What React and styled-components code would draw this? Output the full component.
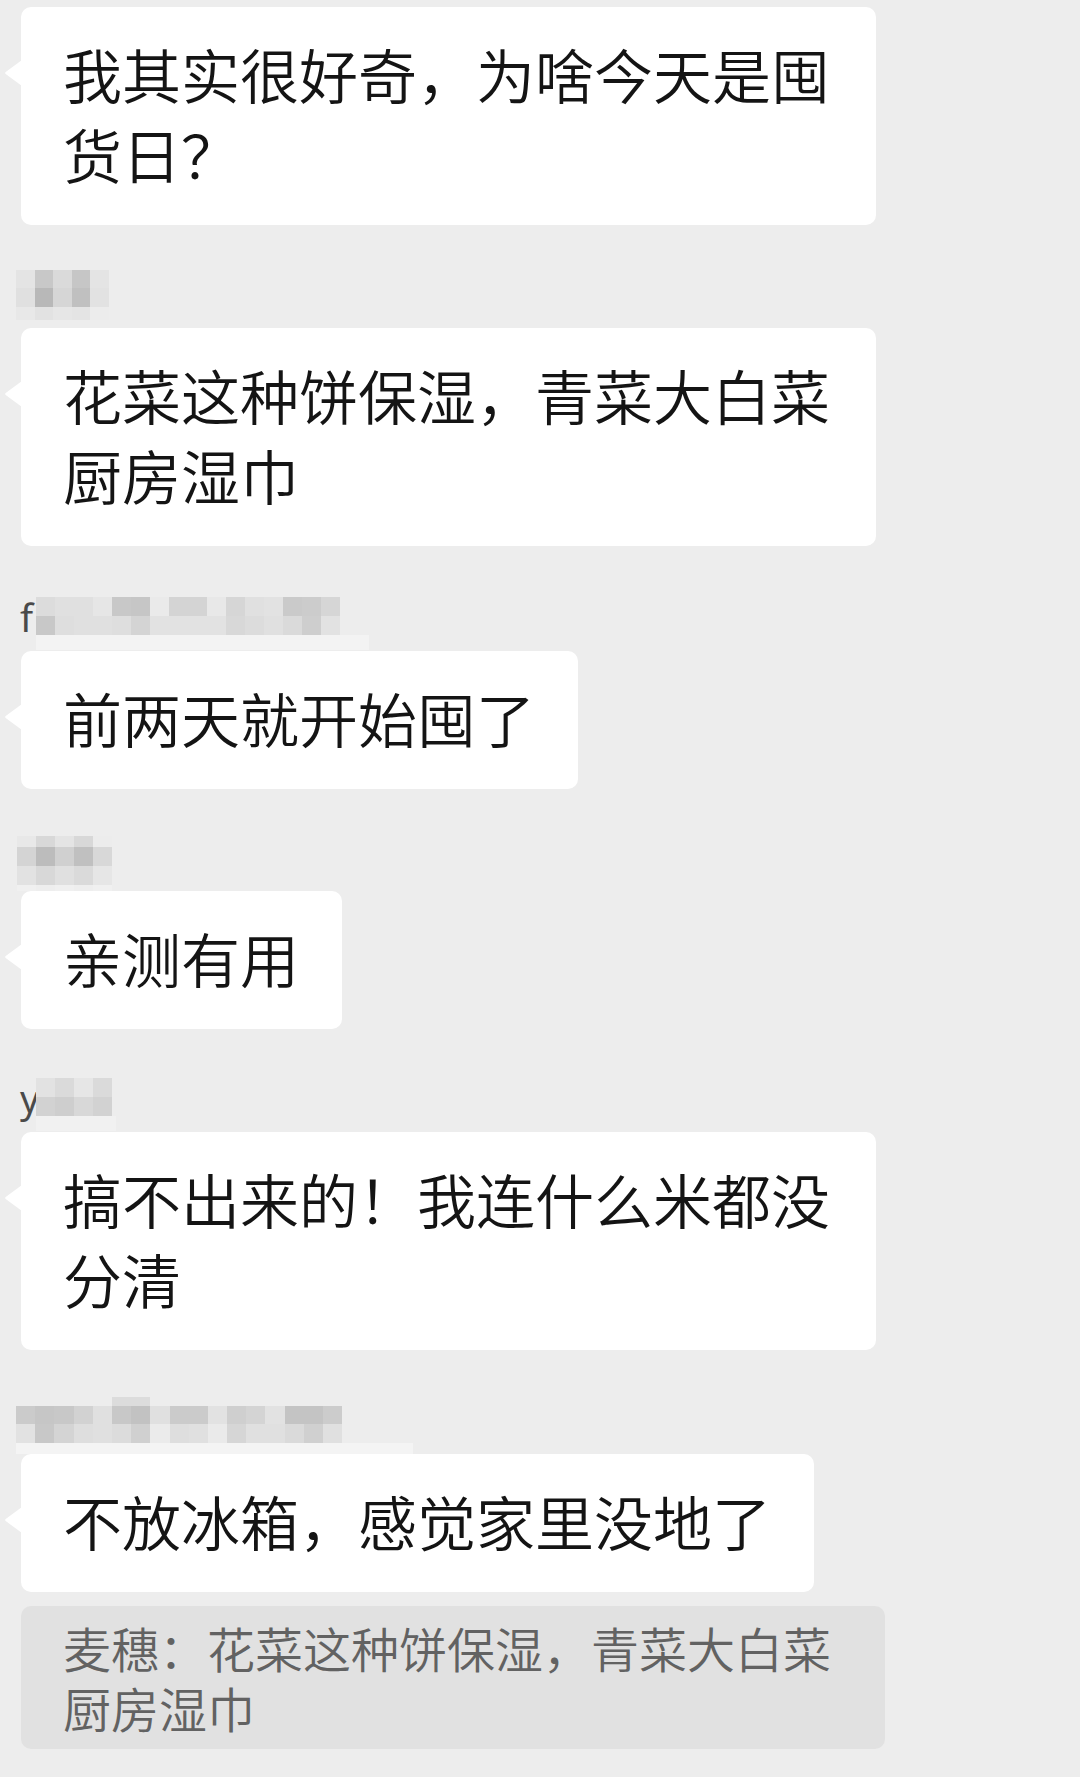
import React from "react";
import styled, { createGlobalStyle } from "styled-components";

const GlobalStyle = createGlobalStyle`
  html, body {
    margin: 0;
    padding: 0;
    background: #ededed;
  }
  body {
    font-family: "Noto Sans CJK SC", "Noto Sans", sans-serif;
    -webkit-font-smoothing: antialiased;
  }
`;

// pixelated (mosaic) sender names, one shade per cell
const messages = [
  {
    id: 1,
    text: "我其实很好奇，为啥今天是囤货日？",
  },
  {
    id: 2,
    gap: 45,
    after: 8,
    name: {
      cell: 18.5,
      offset: 0,
      rows: [
        { h: 18, cells: ["e4", "c8", "da", "c6", "e4"] },
        { h: 19, cells: ["e0", "b8", "d6", "c0", "e2"] },
        { h: 13, cells: ["e8", "e2", "e6", "e4", "ec"] },
      ],
    },
    text: "花菜这种饼保湿，青菜大白菜厨房湿巾",
  },
  {
    id: 3,
    gap: 51,
    after: 1,
    name: {
      letter: "f",
      cell: 19,
      rows: [
        {
          h: 19,
          cells: ["dc", "e0", "e0", "e6", "c8", "c6", "ea", "d4", "d4", "e8", "d6", "e0", "e2", "ca", "cc", "d6"],
        },
        {
          h: 19,
          cells: ["c8", "de", "e0", "e0", "de", "d4", "e2", "e2", "e2", "e2", "d8", "dc", "e0", "da", "ce", "e2"],
        },
        { h: 15, strip: 333, shade: "f3" },
      ],
    },
    text: "前两天就开始囤了",
  },
  {
    id: 4,
    gap: 47,
    after: 0,
    name: {
      cell: 19,
      offset: 1,
      rows: [
        { h: 11, cells: ["e8", "d8", "e4", "d8", "ec"] },
        { h: 19, cells: ["d4", "bc", "d0", "c0", "d8"] },
        { h: 19, cells: ["e2", "d8", "e0", "da", "e6"] },
        { h: 6, cells: ["f0", "ee", "f0", "ee", "f0"] },
      ],
    },
    text: "亲测有用",
  },
  {
    id: 5,
    gap: 49,
    after: 1,
    name: {
      letter: "y",
      cell: 19,
      rows: [
        { h: 19, cells: ["e2", "da", "e6", "da"] },
        { h: 19, cells: ["d2", "ce", "d8", "d2"] },
        { h: 15, strip: 80, shade: "f1" },
      ],
    },
    text: "搞不出来的！我连什么米都没分清",
  },
  {
    id: 6,
    gap: 47,
    after: 0,
    name: {
      cell: 19.2,
      offset: 0,
      rows: [
        { h: 9, cells: [null, null, null, null, null, "dc", "dc"] },
        {
          h: 18,
          cells: ["cb", "c6", "c8", "d2", "e0", "c8", "c2", "e0", "cb", "cb", "e2", "cf", "d4", "e2", "c4", "c4", "cc"],
        },
        {
          h: 19,
          cells: ["e2", "c8", "d4", "de", "e0", "dc", "d0", "eb", "de", "e0", "ea", "d6", "e0", "e0", "da", "d0", "e0"],
        },
        { h: 11, strip: 397, shade: "f4" },
      ],
    },
    text: "不放冰箱，感觉家里没地了",
  },
];

const Mosaic = ({ name }) => (
  <MosaicBox>
    {name.rows.map((row, i) => (
      <MosaicRow key={i} $h={row.h}>
        {row.strip ? (
          <Cell $w={row.strip} $shade={row.shade} />
        ) : (
          row.cells.map((c, j) => <Cell key={j} $w={name.cell} $shade={c} />)
        )}
      </MosaicRow>
    ))}
  </MosaicBox>
);

const App = () => {
  return (
    <>
      <GlobalStyle />
      <Page>
        {messages.map((m) => (
          <Group key={m.id}>
            {m.name && (
              <NameRow $gap={m.gap} $after={m.after} $offset={m.name.offset}>
                {m.name.letter && <NameLetter>{m.name.letter}</NameLetter>}
                <Mosaic name={m.name} />
              </NameRow>
            )}
            <Bubble>{m.text}</Bubble>
          </Group>
        ))}
        <Quote>麦穗：花菜这种饼保湿，青菜大白菜厨房湿巾</Quote>
      </Page>
    </>
  );
};

export default App;

const Page = styled.div`
  width: 1080px;
  height: 1777px;
  box-sizing: border-box;
  padding: 7px 0 0 16px;
  overflow: hidden;
  display: flex;
  flex-direction: column;
  align-items: flex-start;
`;

const Group = styled.div`
  display: flex;
  flex-direction: column;
  align-items: flex-start;
`;

const NameRow = styled.div`
  display: flex;
  align-items: flex-start;
  margin-top: ${(p) => p.$gap}px;
  margin-bottom: ${(p) => p.$after}px;
  margin-left: ${(p) => p.$offset || 0}px;
  padding-left: ${(p) => (p.$offset === undefined ? 4 : 0)}px;
`;

const NameLetter = styled.span`
  width: 16px;
  font-family: "Noto Sans", "Liberation Sans", sans-serif;
  font-size: 38px;
  line-height: 40px;
  color: #4a4a4a;
  white-space: nowrap;
`;

const MosaicBox = styled.div`
  display: flex;
  flex-direction: column;
  filter: blur(0.6px);
`;

const MosaicRow = styled.div`
  display: flex;
  height: ${(p) => p.$h}px;
`;

const Cell = styled.div`
  width: ${(p) => p.$w}px;
  height: 100%;
  background: ${(p) => (p.$shade ? `#${p.$shade}${p.$shade.length === 2 ? p.$shade + p.$shade : ""}` : "transparent")};
`;

const Bubble = styled.div`
  position: relative;
  margin-left: 5px;
  box-sizing: border-box;
  max-width: 855px;
  padding: 27px 43px 31px 42px;
  background: #ffffff;
  border-radius: 10px;
  font-size: 59px;
  font-weight: 350;
  line-height: 80px;
  color: #141414;
  word-break: break-all;

  &::before {
    content: "";
    position: absolute;
    left: -16px;
    top: 53px;
    width: 17px;
    height: 26px;
    background: #ffffff;
    clip-path: polygon(100% 0, 4% 46%, 0 50%, 4% 54%, 100% 100%);
  }
`;

const Quote = styled.div`
  margin: 14px 0 0 5px;
  box-sizing: border-box;
  width: 864px;
  padding: 11px 42px 12px 42px;
  background: #e1e1e1;
  border-radius: 10px;
  font-size: 48px;
  font-weight: 350;
  line-height: 60px;
  color: #626262;
  word-break: break-all;
`;
